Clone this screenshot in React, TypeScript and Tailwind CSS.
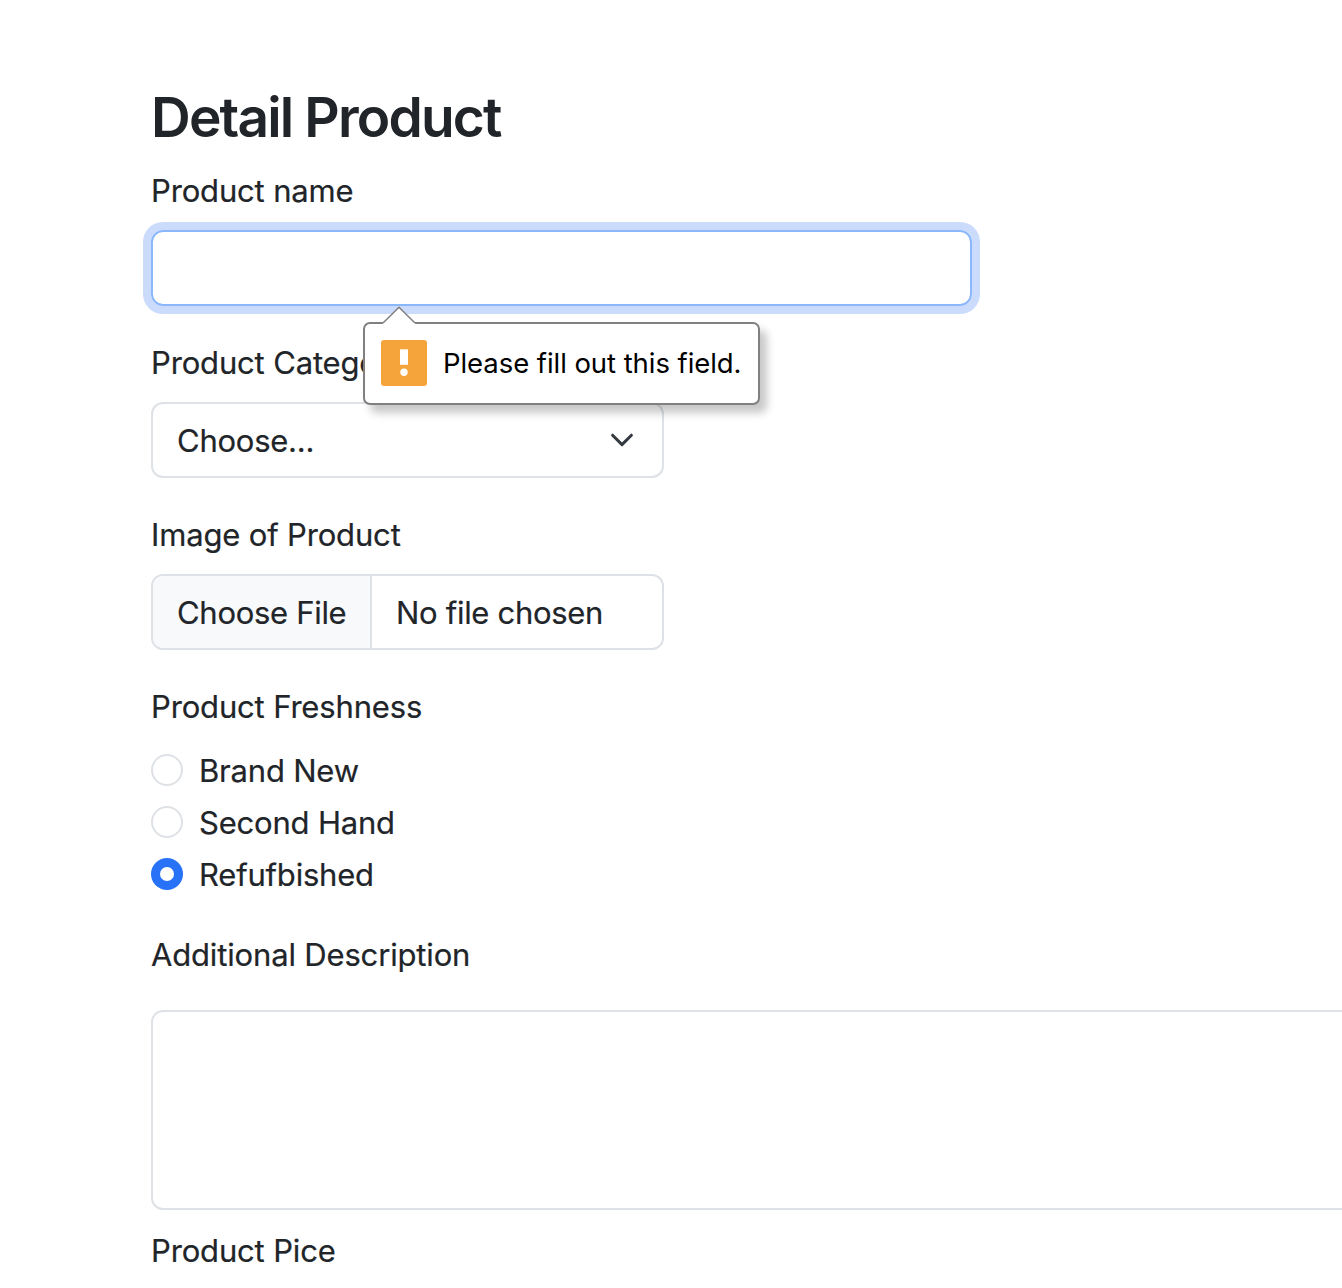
import React from "react";

const label = "block h-12 whitespace-nowrap text-[31px] leading-[48px] tracking-[-0.16px] [-webkit-text-stroke:0.2px_#212529]";

function ValidationBubble() {
  return (
    <div className="absolute top-[322px] left-[363px] z-10 h-[83px] w-[397px] rounded-[7px] border-2 border-[#808080] bg-white shadow-[7px_8px_8px_rgba(0,0,0,0.22)]">
      <svg className="absolute -top-[18px] left-[17px]" width="34" height="19" viewBox="0 0 34 19">
        <path d="M0.5 19 L1 17 L17 1.2 L33 17 L33.5 19Z" fill="#fff" />
        <path d="M1 17 L17 1.2 L33 17" fill="none" stroke="#808080" strokeWidth="1.5" />
      </svg>
      <div className="flex h-[77px] items-center pl-4">
        <svg width="46" height="46" viewBox="0 0 46 46">
          <rect width="46" height="46" rx="3" fill="#f4a43b" />
          <path d="M19 9.3h8v15.5h-8z" fill="#fff" />
          <circle cx="23" cy="32.3" r="3.7" fill="#fff" />
        </svg>
        <span className="ml-4 whitespace-nowrap text-[27.5px] leading-9 tracking-[-0.06px] text-black">Please fill out this field.</span>
      </div>
    </div>
  );
}

function Radio({ text, checked = false }: { text: string; checked?: boolean }) {
  return (
    <label className="mb-1 flex h-12 items-center gap-4 text-[31px] leading-[48px] tracking-[-0.2px] [-webkit-text-stroke:0.2px_#212529]">
      <span className={checked ? "-mt-0.5 flex size-8 items-center justify-center rounded-full bg-[#2872f8]" : "-mt-0.5 size-8 rounded-full border-2 border-[#dee2e6] bg-white"}>
        {checked && <span className="size-3.5 rounded-full bg-white" />}
      </span>
      <span className="whitespace-nowrap">{text}</span>
    </label>
  );
}

export default function App() {
  return (
    <main className="relative h-[1288px] w-[1342px] overflow-hidden bg-white pt-[84px] pl-[151px] font-['Inter',sans-serif] text-[#212529]">
      <h1 className="h-[67px] whitespace-nowrap text-[55px] leading-[67px] font-[560] tracking-[-1.83px]">Detail Product</h1>
      <label className={`${label} mt-4`}>Product name</label>
      <input className="mt-[15px] block h-19 w-[821px] rounded-xl border-2 border-[#8bb8fb] px-6 text-[31px] shadow-[0_0_0_8px_#cbdbfc] outline-none" />
      <label className={`${label} mt-[33px]`}>Product Category</label>
      <button className="mt-[15px] flex h-19 w-[513px] items-center justify-between rounded-xl border-2 border-[#dee2e6] px-6 text-[31px] tracking-[-0.25px] [-webkit-text-stroke:0.2px_#212529]">
        <span className="pt-0.5">Choose...</span>
        <svg width="32" height="32" viewBox="0 0 16 16" fill="none" stroke="#343a40" strokeWidth="1.5" strokeLinecap="round" strokeLinejoin="round"><path d="m3.3 5.6 4.7 4.7 4.7-4.7" /></svg>
      </button>
      <label className={`${label} mt-[33px]`}>Image of Product</label>
      <div className="mt-[15px] flex h-19 w-[513px] items-center overflow-hidden rounded-xl border-2 border-[#dee2e6] text-[31px] tracking-[-0.3px] [-webkit-text-stroke:0.2px_#212529]">
        <span className="flex h-full w-[219px] items-center border-r-2 border-[#dee2e6] bg-[#f8f9fa] pt-0.5 pl-6 whitespace-nowrap">Choose File</span>
        <span className="pt-0.5 pl-6 whitespace-nowrap">No file chosen</span>
      </div>
      <label className={`${label} mt-[33px]`}>Product Freshness</label>
      <div className="mt-4">
        <Radio text="Brand New" />
        <Radio text="Second Hand" />
        <Radio text="Refufbished" checked />
      </div>
      <label className={`${label} mt-8`}>Additional Description</label>
      <textarea className="mt-[31px] block h-[200px] w-[1300px] resize-none rounded-xl border-2 border-[#dee2e6] outline-none" />
      <label className={`${label} mt-[17px]`}>Product Pice</label>
      <ValidationBubble />
    </main>
  );
}
